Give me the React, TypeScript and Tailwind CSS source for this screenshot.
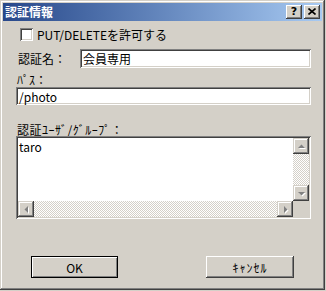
import React from 'react';

const raised =
  'shadow-[inset_-1px_-1px_#404040,inset_1px_1px_#ffffff,inset_-2px_-2px_#808080,inset_2px_2px_#d4d0c8]';
const sunken =
  'shadow-[inset_1px_1px_#808080,inset_-1px_-1px_#ffffff,inset_2px_2px_#404040,inset_-2px_-2px_#d4d0c8]';
const scrollBtn =
  'shadow-[inset_-1px_-1px_#404040,inset_1px_1px_#d4d0c8,inset_-2px_-2px_#808080,inset_2px_2px_#ffffff]';
const track =
  'bg-white [background-image:repeating-conic-gradient(#d4d0c8_0_25%,#ffffff_0_50%)] [background-size:2px_2px]';

function Arrow({ dir }: { dir: 'up' | 'down' | 'left' | 'right' }) {
  const pts: Record<string, string> = {
    up: '1,5 8,5 4.5,1.5',
    down: '1,2 8,2 4.5,5.5',
    left: '5,1 5,8 1.5,4.5',
    right: '2,1 2,8 5.5,4.5',
  };
  const box = dir === 'up' || dir === 'down' ? 'w-[9px] h-[7px]' : 'w-[7px] h-[9px]';
  const vb = dir === 'up' || dir === 'down' ? '0 0 9 7' : '0 0 7 9';
  return (
    <svg viewBox={vb} className={box}>
      <polygon points={pts[dir]} fill="#ffffff" transform="translate(1,1)" />
      <polygon points={pts[dir]} fill="#808080" />
    </svg>
  );
}

function ScrollButton({ dir }: { dir: 'up' | 'down' | 'left' | 'right' }) {
  return (
    <div className={`w-[16px] h-[16px] bg-[#d4d0c8] flex items-center justify-center ${scrollBtn}`}>
      <Arrow dir={dir} />
    </div>
  );
}

export default function App() {
  return (
    <div className="w-[326px] h-[291px] bg-[#d4d0c8] [font-family:'Noto_Sans_CJK_JP','Liberation_Sans',sans-serif] text-[12px] text-black">
      <div className="w-[325px] h-[290px] p-[3px] flex flex-col shadow-[inset_-1px_-1px_#404040,inset_1px_1px_#d4d0c8,inset_-2px_-2px_#808080,inset_2px_2px_#ffffff]">
        {/* Title bar */}
        <div className="h-[18px] flex items-center bg-gradient-to-r from-[#28488a] to-[#a8caf2] pl-[2px] pr-[2px]">
          <span className="text-white font-bold leading-[18px] text-[12px]">認証情報</span>
          <div className="ml-auto flex items-center gap-[2px]">
            <div className={`w-[16px] h-[14px] bg-[#d4d0c8] flex items-center justify-center ${raised}`}>
              <span className="font-bold text-[11px] leading-[11px] [font-family:'DejaVu_Sans',sans-serif] -mt-[1px]">?</span>
            </div>
            <div className={`w-[16px] h-[14px] bg-[#d4d0c8] flex items-center justify-center ${raised}`}>
              <svg viewBox="0 0 8 7" className="w-[8px] h-[7px] -mt-[1px]">
                <path d="M0.5 0.5 L7.5 6.5 M7.5 0.5 L0.5 6.5" stroke="#000" strokeWidth="1.6" />
              </svg>
            </div>
          </div>
        </div>

        {/* Body */}
        <div className="pl-[13px] flex flex-col">
          <div className="mt-[7px] h-[13px] flex items-center">
            <div className={`ml-[4px] w-[13px] h-[13px] bg-white ${sunken}`} />
            <span className="ml-[4px] leading-[13px]">PUT/DELETEを許可する</span>
          </div>

          <div className="mt-[8px] h-[19px] w-[295px] flex items-center">
            <span className="ml-[2px] leading-[13px]">認証名：</span>
            <div className={`ml-auto w-[231px] h-[19px] bg-white flex items-center pl-[3px] ${sunken}`}>
              <span className="leading-[13px]">会員専用</span>
            </div>
          </div>

          <div className="mt-[5px] h-[13px] ml-[1px] leading-[13px]">ﾊﾟｽ：</div>
          <div className={`mt-[1px] w-[295px] h-[18px] bg-white flex items-center pl-[3px] ${sunken}`}>
            <span className="leading-[13px]">/photo</span>
          </div>

          <div className="mt-[18px] h-[13px] ml-[1px] leading-[13px] tracking-[0.5px]">認証ﾕｰｻﾞ/ｸﾞﾙｰﾌﾟ：</div>
          <div className={`w-[295px] h-[83px] bg-white p-[2px] ${sunken}`}>
            <div className="w-full h-full grid grid-cols-[1fr_16px] grid-rows-[1fr_16px]">
              <div className="pl-[1px] pt-[2px] leading-[13px]">taro</div>
              <div className="flex flex-col">
                <ScrollButton dir="up" />
                <div className={`flex-1 ${track}`} />
                <ScrollButton dir="down" />
              </div>
              <div className="flex">
                <ScrollButton dir="left" />
                <div className={`flex-1 ${track}`} />
                <ScrollButton dir="right" />
              </div>
              <div className="bg-[#d4d0c8]" />
            </div>
          </div>

          <div className="mt-[37px] w-[295px] flex">
            <button className="ml-[15px] w-[87px] h-[22px] bg-[#d4d0c8] shadow-[inset_0_0_0_1px_#000000,inset_2px_2px_#ffffff,inset_-2px_-2px_#808080] leading-[13px]">
              OK
            </button>
            <button className={`ml-auto mr-[17px] w-[88px] h-[22px] bg-[#d4d0c8] leading-[13px] tracking-[1px] ${raised}`}>
              ｷｬﾝｾﾙ
            </button>
          </div>
        </div>
      </div>
    </div>
  );
}
